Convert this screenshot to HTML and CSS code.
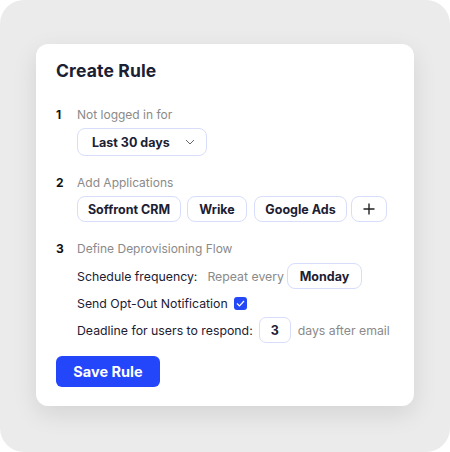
FILE: index.html
```html
<!DOCTYPE html>
<html>
<head>
<meta charset="utf-8">
<link rel="stylesheet" href="styles.css">
</head>
<body>
<div class="frame">
  <div class="card">
    <h1 class="title">Create Rule</h1>

    <div class="step">
      <div class="step-head"><span class="num">1</span><span class="label">Not logged in for</span></div>
      <div class="step-body">
        <div class="select">
          <span>Last 30 days</span>
          <svg class="chev" width="10" height="6" viewBox="0 0 10 6"><path d="M1 1 L5 5 L9 1" fill="none" stroke="#666" stroke-width="1"/></svg>
        </div>
      </div>
    </div>

    <div class="step">
      <div class="step-head"><span class="num">2</span><span class="label">Add Applications</span></div>
      <div class="step-body chips">
        <span class="chip w-soff">Soffront CRM</span>
        <span class="chip w-wrike">Wrike</span>
        <span class="chip w-google">Google Ads</span>
        <span class="chip plus"><svg width="12" height="12" viewBox="0 0 12 12"><path d="M6 0.5 V11.5 M0.5 6 H11.5" stroke="#222" stroke-width="1.4"/></svg></span>
      </div>
    </div>

    <div class="step last">
      <div class="step-head"><span class="num">3</span><span class="label">Define Deprovisioning Flow</span></div>
      <div class="step-body rows">
        <div class="row">
          <span class="text">Schedule frequency:</span>
          <span class="muted gap-l">Repeat every</span>
          <span class="chip w-monday">Monday</span>
        </div>
        <div class="row">
          <span class="text">Send Opt-Out Notification</span>
          <span class="check"><svg width="9" height="7" viewBox="0 0 9 7"><path d="M1 3.5 L3.5 6 L8 1" fill="none" stroke="#fff" stroke-width="1.2"/></svg></span>
        </div>
        <div class="row">
          <span class="text">Deadline for users to respond:</span>
          <span class="input">3</span>
          <span class="muted">days after email</span>
        </div>
      </div>
    </div>

    <button class="save">Save Rule</button>
  </div>
</div>
</body>
</html>
```

FILE: styles.css
```css
html, body {
  margin: 0;
  padding: 0;
  background: #ffffff;
}
body {
  font-family: "Inter", "Liberation Sans", sans-serif;
  color: #1b2033;
  white-space: nowrap;
}
.frame {
  width: 450px;
  height: 452px;
  box-sizing: border-box;
  background: #ebebeb;
  border-radius: 24px;
  padding: 44px 36px 0 36px;
}
.card {
  background: #fff;
  border-radius: 12px;
  box-shadow: 0 8px 24px rgba(0,0,0,0.10);
  height: 362px;
  box-sizing: border-box;
  padding: 17px 20px 0 20px;
}
.title {
  margin: 0 0 25px 0;
  font-size: 17.5px;
  font-weight: 700;
  line-height: 20px;
  color: #1b2033;
  letter-spacing: 0.15px;
}
.step {
  margin-bottom: 18px;
}
.step.last {
  margin-bottom: 0;
}
.step-head {
  display: flex;
  align-items: center;
  height: 16px;
  margin-bottom: 6px;
}
.num {
  width: 21px;
  font-size: 12px;
  font-weight: 700;
  color: #111;
}
.label {
  font-size: 12px;
  color: #8a8a8a;
}
.step-body {
  margin-left: 21px;
}
.select {
  display: inline-flex;
  align-items: center;
  justify-content: space-between;
  box-sizing: border-box;
  width: 130px;
  height: 28px;
  border: 1px solid #d8ddfb;
  border-radius: 8px;
  padding: 0 11px 0 14px;
  font-size: 12.5px;
  font-weight: 700;
}
.chev { display: block; }
.chips {
  display: flex;
}
.chip {
  display: inline-flex;
  align-items: center;
  justify-content: center;
  flex-shrink: 0;
  box-sizing: border-box;
  height: 26px;
  padding: 0;
  border: 1px solid #d8ddfb;
  border-radius: 8px;
  font-size: 12.5px;
  font-weight: 700;
}
.w-soff { width: 104px; margin-right: 6px; }
.w-wrike { width: 60px; margin-right: 7px; }
.w-google { width: 93px; margin-right: 4px; }
.chip.plus { width: 36px; }
.w-monday { width: 75px; }
.rows {
  display: flex;
  flex-direction: column;
  gap: 1px;
  padding-top: 1px;
}
.row {
  display: flex;
  align-items: center;
  height: 26px;
  font-size: 12.3px;
}
.text { color: #1b2033; }
.muted { color: #8a8a8a; }
.gap-l { margin-left: 10px; margin-right: 3px; }
.check {
  display: inline-flex;
  align-items: center;
  justify-content: center;
  width: 13px;
  height: 13px;
  background: #2448f5;
  border-radius: 3px;
  margin-left: 6px;
}
.input {
  display: inline-flex;
  align-items: center;
  justify-content: center;
  box-sizing: border-box;
  width: 32px;
  height: 26px;
  border: 1px solid #d8ddfb;
  border-radius: 7px;
  margin: 0 7px 0 6px;
  font-weight: 700;
  font-size: 12.5px;
}
.save {
  display: block;
  margin-top: 13px;
  width: 104px;
  height: 31px;
  border: none;
  border-radius: 6px;
  background: #2446fb;
  color: #fff;
  font-family: inherit;
  font-size: 14.5px;
  font-weight: 700;
}
```
